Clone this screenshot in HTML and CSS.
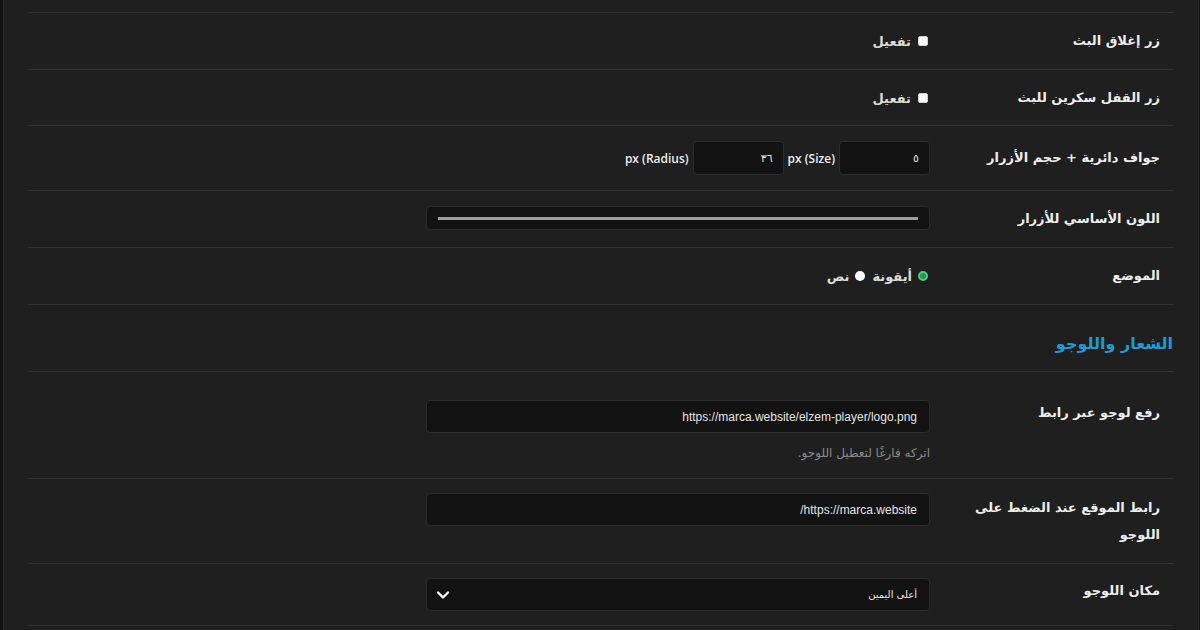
FILE: index.html
```html
<!DOCTYPE html>
<html lang="ar" dir="rtl">
<head>
    <meta charset="UTF-8">
    <meta name="viewport" content="width=device-width, initial-scale=1.0">
    <title>إعدادات المشغل</title>
    <link rel="stylesheet" href="styles.css">
</head>
<body>
    <div class="panel">
        <div class="row-cut"></div>

        <!-- ازرار التحكم -->
        <div class="form-row">
            <div class="field-label">زر إغلاق البث</div>
            <div class="field-control">
                <label class="check"><input type="checkbox"> تفعيل</label>
            </div>
        </div>
        <div class="form-row row-tight">
            <div class="field-label">زر القفل سكرين للبث</div>
            <div class="field-control">
                <label class="check"><input type="checkbox"> تفعيل</label>
            </div>
        </div>
        <div class="form-row">
            <div class="field-label">جواف دائرية + حجم الأزرار</div>
            <div class="field-control inline">
                <input class="input small" type="text" value="٥">
                <span class="unit">px (Size)</span>
                <input class="input small" type="text" value="٣٦">
                <span class="unit">px (Radius)</span>
            </div>
        </div>
        <div class="form-row">
            <div class="field-label">اللون الأساسي للأزرار</div>
            <div class="field-control">
                <div class="color-input"><span class="swatch"></span></div>
            </div>
        </div>
        <div class="form-row">
            <div class="field-label">الموضع</div>
            <div class="field-control inline radios">
                <label class="radio"><span class="dot dot-on"></span>أيقونة</label>
                <label class="radio"><span class="dot"></span>نص</label>
            </div>
        </div>

        <!-- الشعار -->
        <h2 class="section-title">الشعار واللوجو</h2>

        <div class="form-row row-top row-logo">
            <div class="field-label">رفع لوجو عبر رابط</div>
            <div class="field-control">
                <input class="input wide" type="text" value="https://marca.website/elzem-player/logo.png">
                <p class="hint">اتركه فارغًا لتعطيل اللوجو.</p>
            </div>
        </div>
        <div class="form-row row-top row-link">
            <div class="field-label two-lines">رابط الموقع عند الضغط على اللوجو</div>
            <div class="field-control">
                <input class="input wide" type="text" value="https://marca.website/">
            </div>
        </div>
        <div class="form-row row-top row-select">
            <div class="field-label">مكان اللوجو</div>
            <div class="field-control">
                <div class="select">
                    <span>أعلى اليمين</span>
                    <svg width="14" height="10" viewBox="0 0 14 10"><path d="M2 2.5 L7 7.5 L12 2.5" fill="none" stroke="#fff" stroke-width="2.4" stroke-linecap="round" stroke-linejoin="round"/></svg>
                </div>
            </div>
        </div>
    </div>
</body>
</html>
```

FILE: styles.css
```css
/* الخلفية العامة */
html, body {
    margin: 0;
    height: 100%;
}

body {
    background: #121212;
    color: #ececec;
    font-family: 'DejaVu Sans', 'Noto Sans', sans-serif;
    overflow: hidden;
}

.panel {
    height: 100%;
    margin: 0 1px 0 3px;
    padding: 0 25px 0 24px;
    background: #1f1f1f;
    border-left: 1px solid #2a2a2a;
    border-right: 1px solid #2a2a2a;
}

/* بقية الصف السابق */
.row-cut {
    height: 12px;
    border-bottom: 1px solid #313131;
}

.form-row {
    display: grid;
    grid-template-columns: 200px 504px;
    column-gap: 30px;
    align-items: center;
    padding: 15px 13px 15px 0;
    border-bottom: 1px solid #313131;
}

.row-tight {
    padding-bottom: 14px;
}

.row-top {
    align-items: start;
}

.row-logo {
    padding-top: 28px;
}

.row-link {
    padding-top: 14px;
}

.row-select {
    padding: 14px 13px 14px 0;
}

.field-label {
    font-size: 13px;
    font-weight: bold;
    line-height: 26px;
    color: #ededed;
}

.field-label.two-lines {
    line-height: 27px;
    padding-top: 1px;
}

.field-control {
    min-height: 26px;
}

.inline {
    display: flex;
    align-items: center;
    gap: 4px;
}

/* مربع التفعيل */
.check {
    display: flex;
    align-items: center;
    gap: 7px;
    height: 26px;
    margin-right: 2px;
    font-size: 13px;
    font-weight: bold;
    color: #dcdcd4;
}

.check input {
    appearance: none;
    margin: 0;
    width: 10px;
    height: 10px;
    background: #fff;
    border: 1px solid #d0d0d0;
    border-radius: 2px;
}

.input {
    box-sizing: border-box;
    height: 34px;
    padding: 0 12px;
    background: #121212;
    border: 1px solid #2c2c2c;
    border-radius: 4px;
    color: #e2e2e2;
    font-family: 'Liberation Sans', Arial, sans-serif;
    font-size: 12px;
    direction: rtl;
    outline: none;
}

.input.small {
    width: 91px;
    padding: 0 10px;
    font-family: 'DejaVu Sans', sans-serif;
    font-size: 11px;
}

.input.wide {
    display: block;
    width: 504px;
    height: 33px;
}

.unit {
    font-family: 'Open Sans', sans-serif;
    font-size: 12px;
    font-weight: 600;
    color: #ececec;
}

/* حقل اللون */
.color-input {
    box-sizing: border-box;
    display: flex;
    align-items: center;
    width: 504px;
    height: 24px;
    padding: 0 11px;
    background: #121212;
    border: 1px solid #2c2c2c;
    border-radius: 4px;
}

.swatch {
    flex: 1;
    height: 3px;
    background: #9c9c9c;
}

/* الاختيارات */
.radios {
    gap: 7px;
    margin-right: 2px;
    height: 26px;
}

.radio {
    display: flex;
    align-items: center;
    gap: 6px;
    font-size: 13px;
    font-weight: bold;
    color: #dcdcd4;
}

.dot {
    box-sizing: border-box;
    width: 10px;
    height: 10px;
    border-radius: 50%;
    background: #fff;
}

.dot-on {
    background: #1f9a4e;
    border: 2px solid #55c985;
}

.section-title {
    margin: 0;
    padding: 25px 0 13px;
    font-size: 16px;
    line-height: 28px;
    font-weight: bold;
    color: #1e9ad6;
    border-bottom: 1px solid #313131;
}

.hint {
    margin: 10px 0 0;
    font-size: 12px;
    line-height: 20px;
    color: #8a8a8a;
}

/* القائمة المنسدلة */
.select {
    box-sizing: border-box;
    display: flex;
    align-items: center;
    justify-content: space-between;
    width: 504px;
    height: 33px;
    padding: 0 12px 0 9px;
    background: #121212;
    border: 1px solid #2c2c2c;
    border-radius: 4px;
    font-size: 10px;
    color: #e6e6e6;
}

.select svg {
    display: block;
}
```
